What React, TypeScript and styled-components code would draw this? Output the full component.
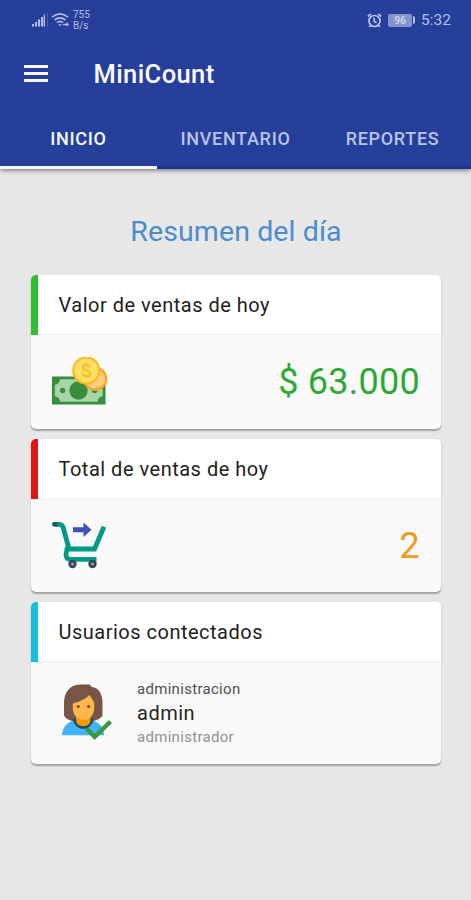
import React from "react";
import styled, { createGlobalStyle } from "styled-components";

const GlobalStyle = createGlobalStyle`
  * { box-sizing: border-box; }
  body {
    margin: 0;
    background: #e7e7e7;
    font-family: Roboto, "Liberation Sans", sans-serif;
  }
`;

const Screen = styled.div`
  width: 471px;
  height: 900px;
  display: flex;
  flex-direction: column;
  background: #e7e7e7;
  overflow: hidden;
`;

const Header = styled.header`
  height: 169px;
  flex: none;
  display: flex;
  flex-direction: column;
  background: #263f9b;
  box-shadow: 0 1px 5px rgba(0, 0, 0, 0.55);
`;

const StatusBar = styled.div`
  height: 40px;
  display: flex;
  align-items: center;
  justify-content: space-between;
  padding: 0 20px 0 31px;
  color: #b3bfe6;
`;

const StatusGroup = styled.div<{ $gap: number }>`
  display: flex;
  align-items: center;
  gap: ${(p) => p.$gap}px;
`;

const NetSpeed = styled.div`
  display: flex;
  flex-direction: column;
  margin-left: 1px;
  font-size: 10px;
  line-height: 11.5px;
`;

const Battery = styled.div`
  width: 24px;
  height: 13px;
  display: flex;
  align-items: center;
  justify-content: center;
  border-radius: 2px;
  background: #8493ca;
  color: #d5dcf3;
  font-size: 10.5px;
  font-weight: 500;
`;

const BatteryTip = styled.div`
  width: 2px;
  height: 8px;
  border-radius: 0 2px 2px 0;
  background: #b3bfe6;
`;

const BatteryGroup = styled.div`
  display: flex;
  align-items: center;
  gap: 1px;
`;

const Clock = styled.span`
  font-size: 15.5px;
  line-height: 18px;
`;

const TitleBar = styled.div`
  height: 67px;
  display: flex;
  align-items: center;
  padding-left: 24px;
  gap: 45.5px;
`;

const MenuButton = styled.button`
  width: 24px;
  height: 17px;
  padding: 0;
  border: 0;
  background: none;
  display: flex;
  flex-direction: column;
  justify-content: space-between;
`;

const MenuLine = styled.span`
  width: 24px;
  height: 3px;
  background: #f5f6ff;
`;

const AppName = styled.h1`
  margin: 0;
  font-size: 25.5px;
  line-height: 30px;
  font-weight: 500;
  letter-spacing: 0.4px;
  color: #fafaff;
`;

const Tabs = styled.nav`
  flex: 1;
  display: grid;
  grid-template-columns: repeat(3, 157px);
`;

const Tab = styled.a<{ $active?: boolean }>`
  display: flex;
  align-items: center;
  justify-content: center;
  padding-top: 4px;
  font-size: 18px;
  font-weight: 500;
  letter-spacing: 0.7px;
  color: ${(p) => (p.$active ? "#f8f9ff" : "#b9c3ea")};
  border-bottom: 3px solid ${(p) => (p.$active ? "#f5f5fb" : "#153690")};
`;

const Content = styled.main`
  flex: 1;
  display: flex;
  flex-direction: column;
  padding: 44px 30px 0 31px;
`;

const Heading = styled.h2`
  margin: 0 0 25px;
  height: 37px;
  font-size: 28.5px;
  line-height: 37px;
  font-weight: 400;
  text-align: center;
  letter-spacing: 0.1px;
  color: #4b8dcc;
`;

const CardList = styled.div`
  display: flex;
  flex-direction: column;
  gap: 10px;
`;

const Card = styled.section<{ $height: number }>`
  height: ${(p) => p.$height}px;
  display: flex;
  flex-direction: column;
  border-radius: 5px;
  overflow: hidden;
  background: #f9f9f9;
  box-shadow: 0 1.5px 1.5px rgba(0, 0, 0, 0.3);
`;

const CardHeader = styled.div<{ $accent: string }>`
  height: 60px;
  flex: none;
  display: flex;
  align-items: center;
  padding-left: 20.5px;
  border-left: 7px solid ${(p) => p.$accent};
  background: linear-gradient(#fff 59px, #f1f1f1 59px);
  font-size: 20px;
  letter-spacing: 0.5px;
  color: #212121;
`;

const CardBody = styled.div<{ $left: number }>`
  flex: 1;
  display: flex;
  align-items: center;
  padding: 0 21px 0 ${(p) => p.$left}px;
`;

const Amount = styled.div<{ $color: string }>`
  margin-left: auto;
  padding-top: 1px;
  font-size: 36px;
  line-height: 42px;
  letter-spacing: 0.25px;
  color: ${(p) => p.$color};
`;

const UserInfo = styled.div`
  display: flex;
  flex-direction: column;
  margin-left: 21px;
`;

const UserLine = styled.span<{ $size: number; $color: string; $spacing: number }>`
  font-size: ${(p) => p.$size}px;
  line-height: 24px;
  letter-spacing: ${(p) => p.$spacing}px;
  color: ${(p) => p.$color};
`;

const SignalIcon = () => (
  <svg width="17" height="15" viewBox="0 0 17 15" fill="#b3bfe6">
    <rect x="1" y="11" width="2" height="2.5" />
    <rect x="4" y="9" width="2" height="4.5" />
    <rect x="7" y="6.5" width="2" height="7" />
    <rect x="10" y="4" width="2" height="9.5" />
    <rect x="12.6" y="1.5" width="1.4" height="12" />
    <rect x="16" y="0" width="1" height="14" opacity=".25" />
  </svg>
);

const WifiIcon = () => (
  <svg width="18" height="16" viewBox="0 0 18 16" fill="none" stroke="#b3bfe6" strokeWidth="1.7">
    <path d="M1 5.2Q9 -1.4 17 5.2" />
    <path d="M3.6 8Q9 3.6 14.4 8" />
    <path d="M6 10.6Q9 8 12 10.6" />
    <path d="M7.400 12.300h3.400L9.100 14.200z" fill="#b3bfe6" stroke="none" />
    <path d="M12 12.500h5M15.500 11l1.600 1.500-1.600 1.500" strokeWidth="1.3" />
  </svg>
);

const AlarmIcon = () => (
  <svg width="15" height="15" viewBox="0 0 15 15" fill="none" stroke="#b9c6ec" strokeWidth="1.7">
    <circle cx="7.5" cy="8" r="5.5" />
    <path d="M7.200 4.800v3.600l2.400 1.300M.8 3.500l3-2.600M14.200 3.500l-3-2.600M3.600 12.200l-1.400 1.700M11.400 12.200l1.400 1.700" />
  </svg>
);

const MoneyIcon = () => (
  <svg width="56" height="50" viewBox="0 0 56 50">
    <rect x="0" y="19.500" width="53.500" height="28" fill="#388e3c" />
    <path d="M8 22.300h37.500a5.500 5.500 0 0 0 5.200 5.500v11.500a5.500 5.500 0 0 0-5.200 5.500H8a5.500 5.500 0 0 0-5.200-5.500V27.800A5.500 5.500 0 0 0 8 22.300z" fill="#a5d6a7" />
    <circle cx="26.500" cy="33.500" r="9.200" fill="#388e3c" />
    <circle cx="10.600" cy="33.500" r="2.700" fill="#388e3c" />
    <circle cx="42.600" cy="33.500" r="2.700" fill="#388e3c" />
    <circle cx="43.200" cy="21.800" r="11" fill="#ffcc80" stroke="#ffa21a" strokeWidth="2.2" />
    <circle cx="34.300" cy="13.500" r="13" fill="#ffe066" stroke="#fbbc20" strokeWidth="2.2" />
    <path d="M38 10.100C37.100 6.600 31 7 31 10.400c0 3.800 7.200 2 7.200 6 0 3.600-6.800 3.800-7.600.2M34.500 6v2M34.500 18.800v2" fill="none" stroke="#fbc02d" strokeWidth="2.4" />
  </svg>
);

const CartIcon = () => (
  <svg width="56" height="48" viewBox="0 0 56 48">
    <path d="M2.500 3.300h4.800c2.300 0 3.200 1 3.900 3.200L17 28h25.500L52 5.700" fill="none" stroke="#009b84" strokeWidth="4.800" />
    <path d="M15.500 26l-1.200 5.300c-1.100 4 .4 7.100 4.200 7.100H44.500" fill="none" stroke="#009b84" strokeWidth="4.800" />
    <path d="M2.300 1h3.200v4.600H2.300a2.300 2.300 0 0 1 0-4.600z" fill="#155c55" />
    <circle cx="20.500" cy="43" r="4.200" fill="#37474f" />
    <circle cx="40.500" cy="43" r="4.200" fill="#37474f" />
    <circle cx="20.500" cy="43" r="1.500" fill="#90a4ae" />
    <circle cx="40.500" cy="43" r="1.500" fill="#90a4ae" />
    <path d="M21 6.300h10.500V1.500L39.500 8.800l-8 7.200v-4.800H21z" fill="#3f51b5" />
  </svg>
);

const UserIcon = () => (
  <svg width="54" height="58" viewBox="0 0 54 58">
    <path d="M0 51.300c0-8.500 6.200-14.200 14.500-15.200h13C36 37 42 42.500 42 51.300z" fill="#42b3f4" />
    <path d="M18 .5C7.500.7 2.200 8.500 2 19v11.500c0 3.300 5.500 6.300 10.500 6.700h17c5-.4 11-3.300 11-6.700V18.500C40.500 10.500 37 3.700 30 3.100L27.500.5z" fill="#795548" />
    <path d="M10.800 35c2.700 0 3.700-1 3.700-4H28c0 3 1 4 3.700 4-1.300 6.300-5.200 9.800-10.400 9.800s-9.300-3.500-10.500-9.800z" fill="#174e68" />
    <path d="M14 32h14.500v4c0 3.500-3 6.200-7.200 6.200S14 39.500 14 36z" fill="#ff9800" />
    <path d="M10.800 19.500c4.700-.8 13.500-4.800 16.700-8.700l4.700 7.700v6c0 6.300-4.700 11.300-10.700 11.300s-10.700-5-10.700-11.300z" fill="#ffb74d" />
    <circle cx="16.200" cy="22.500" r="1.500" fill="#784719" />
    <circle cx="26.600" cy="22.500" r="1.500" fill="#784719" />
    <path d="M24.500 44.500l8.200 8.300L48.500 37.500" fill="none" stroke="#3a9940" strokeWidth="4.400" />
  </svg>
);

export default function App() {
  return (
    <>
      <GlobalStyle />
      <Screen>
        <Header>
          <StatusBar>
            <StatusGroup $gap={3}>
              <SignalIcon />
              <WifiIcon />
              <NetSpeed>
                <span>755</span>
                <span>B/s</span>
              </NetSpeed>
            </StatusGroup>
            <StatusGroup $gap={6}>
              <AlarmIcon />
              <BatteryGroup>
                <Battery>96</Battery>
                <BatteryTip />
              </BatteryGroup>
              <Clock>5:32</Clock>
            </StatusGroup>
          </StatusBar>
          <TitleBar>
            <MenuButton aria-label="Menú">
              <MenuLine />
              <MenuLine />
              <MenuLine />
            </MenuButton>
            <AppName>MiniCount</AppName>
          </TitleBar>
          <Tabs>
            <Tab $active>INICIO</Tab>
            <Tab>INVENTARIO</Tab>
            <Tab>REPORTES</Tab>
          </Tabs>
        </Header>
        <Content>
          <Heading>Resumen del día</Heading>
          <CardList>
            <Card $height={153.5}>
              <CardHeader $accent="#2fbe30">Valor de ventas de hoy</CardHeader>
              <CardBody $left={21}>
                <MoneyIcon />
                <Amount $color="#2ca933">$ 63.000</Amount>
              </CardBody>
            </Card>
            <Card $height={153.5}>
              <CardHeader $accent="#e11313">Total de ventas de hoy</CardHeader>
              <CardBody $left={21}>
                <CartIcon />
                <Amount $color="#f39a1e">2</Amount>
              </CardBody>
            </Card>
            <Card $height={162}>
              <CardHeader $accent="#12bfd9">Usuarios contectados</CardHeader>
              <CardBody $left={31}>
                <UserIcon />
                <UserInfo>
                  <UserLine $size={15} $color="#505050" $spacing={0.3}>administracion</UserLine>
                  <UserLine $size={20} $color="#252525" $spacing={0.5}>admin</UserLine>
                  <UserLine $size={15} $color="#929292" $spacing={0.3}>administrador</UserLine>
                </UserInfo>
              </CardBody>
            </Card>
          </CardList>
        </Content>
      </Screen>
    </>
  );
}
